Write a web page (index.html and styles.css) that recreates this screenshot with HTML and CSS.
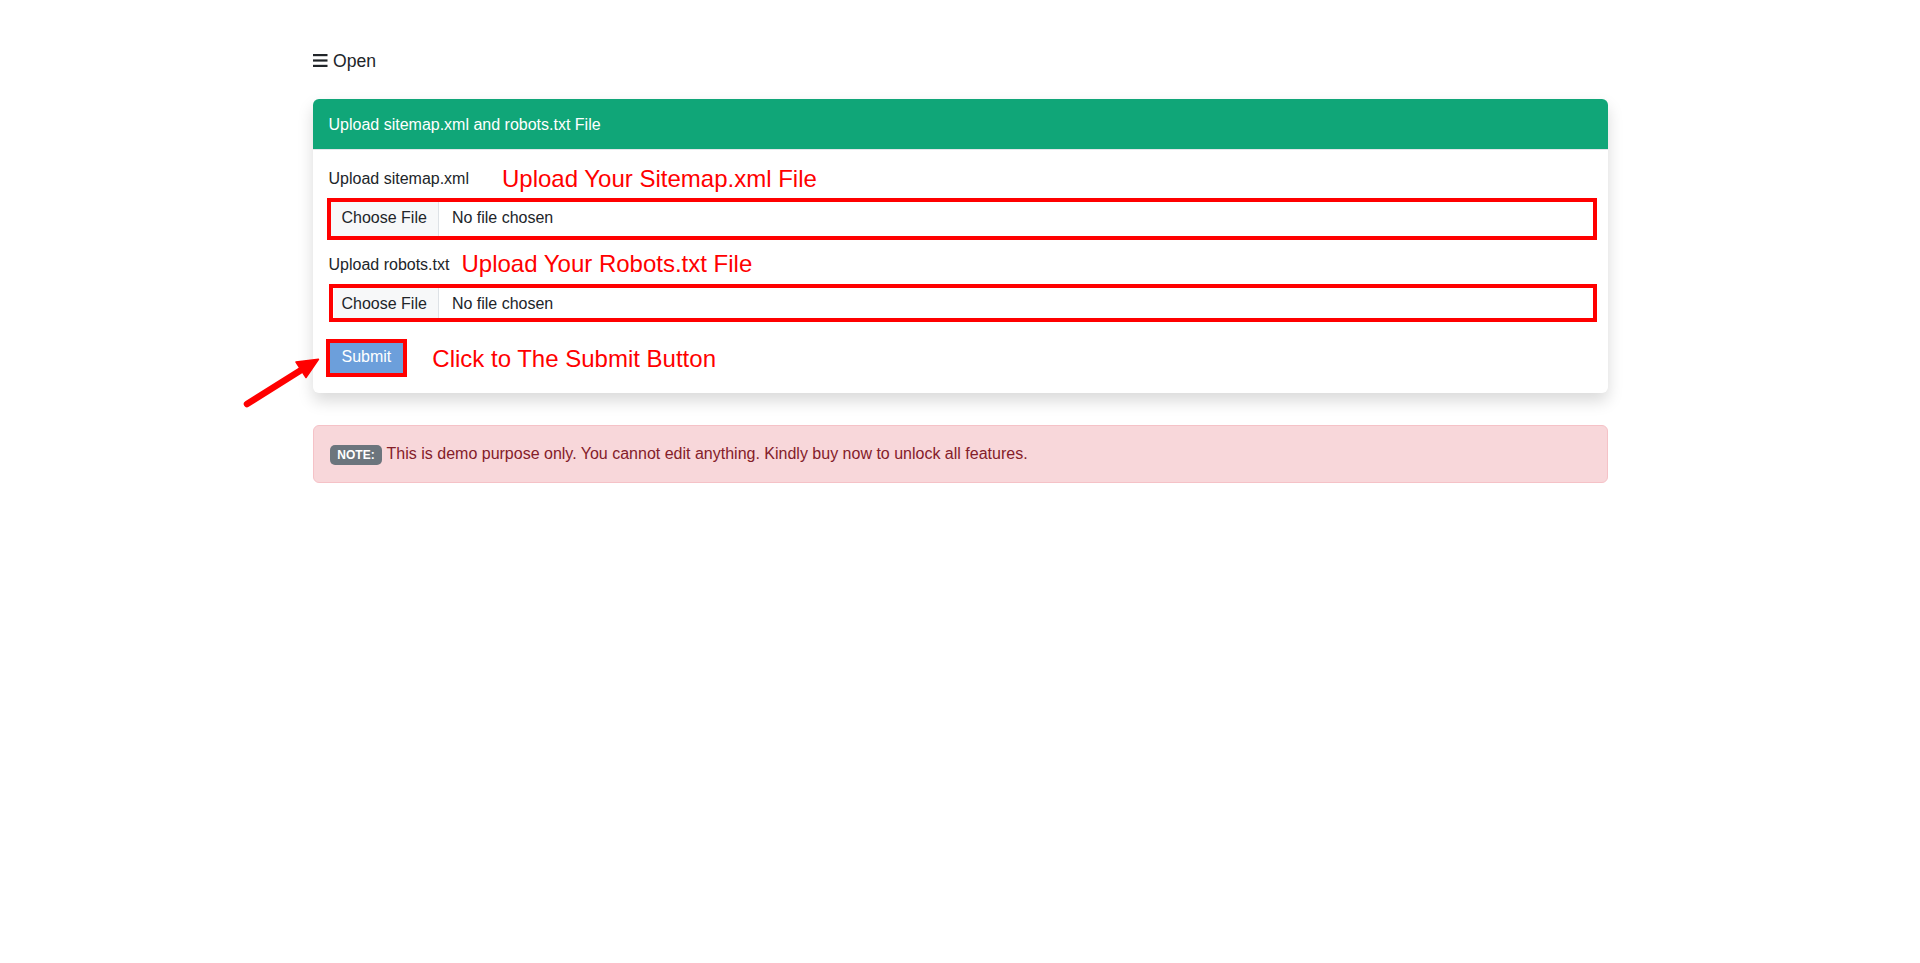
FILE: index.html
```html
<!DOCTYPE html>
<html lang="en">
<head>
<meta charset="utf-8">
<title>Upload sitemap.xml and robots.txt File</title>
<link rel="stylesheet" href="styles.css">
</head>
<body>
<div class="container">
  <div class="topbar">
    <span class="menu-btn"><svg class="menu-icon" viewBox="0 0 15 13" width="15" height="13" aria-hidden="true"><rect x="0" y="0" width="14.5" height="2.2" fill="#212529"/><rect x="0" y="5.4" width="14.5" height="2.2" fill="#212529"/><rect x="0" y="10.8" width="14.5" height="2.2" fill="#212529"/></svg>Open</span>
  </div>

  <div class="card">
    <div class="card-header">Upload sitemap.xml and robots.txt File</div>
    <div class="card-body">
      <div class="field-label"><label>Upload sitemap.xml</label><span class="annot annot-1">Upload Your Sitemap.xml File</span></div>
      <div class="file-box file-box-1"><span class="file-btn">Choose File</span><span class="file-name">No file chosen</span></div>

      <div class="field-label field-label-2"><label>Upload robots.txt</label><span class="annot annot-2">Upload Your Robots.txt File</span></div>
      <div class="file-box file-box-2"><span class="file-btn">Choose File</span><span class="file-name">No file chosen</span></div>

      <div class="submit-row">
        <span class="submit-frame"><button class="btn-submit" type="button">Submit</button></span>
        <span class="annot-3">Click to The Submit Button</span>
      </div>
    </div>
    <svg class="arrow" viewBox="0 0 87 62" width="87" height="62" aria-hidden="true">
      <line x1="8" y1="54" x2="63" y2="19.5" stroke="#ff0000" stroke-width="6.5" stroke-linecap="round"/>
      <polygon points="79.5,9.3 57,12 67,27.5" fill="#ff0000" stroke="#ff0000" stroke-width="1.5" stroke-linejoin="round"/>
    </svg>
  </div>

  <div class="alert"><span class="badge">NOTE:</span> This is demo purpose only. You cannot edit anything. Kindly buy now to unlock all features.</div>
</div>
</body>
</html>
```

FILE: styles.css
```css
html, body {
  margin: 0;
  padding: 0;
  background: #ffffff;
}

body {
  font-family: "Liberation Sans", Arial, sans-serif;
  font-size: 16px;
  line-height: 24px;
  color: #212529;
}

.container {
  width: 1295px;
  margin: 0 auto;
  padding-top: 48px;
}

/* top "Open" toggle */
.topbar {
  font-size: 17.6px;
  line-height: 26px;
  height: 26px;
  margin-bottom: 25px;
}

.menu-icon {
  margin-right: 5.5px;
  vertical-align: baseline;
}

/* card */
.card {
  position: relative;
  background: #ffffff;
  border-radius: 6px;
  box-shadow: 0 8px 16px rgba(0, 0, 0, 0.15);
  margin-bottom: 32px;
}

.card-header {
  background: #10a678;
  color: #ffffff;
  padding: 14px 16px 12px;
  line-height: 24px;
  border-bottom: 1px solid #e3e6ea;
  border-radius: 6px 6px 0 0;
}

.card-body {
  padding: 17px 11px 16px 14px;
}

.field-label {
  padding-left: 2px;
  height: 24px;
  margin-bottom: 7px;
  white-space: nowrap;
}

.field-label-2 {
  margin-bottom: 7px;
}

.annot {
  color: #ff0000;
  font-size: 24px;
  line-height: 0;
  vertical-align: -2px;
}

.annot-1 {
  margin-left: 33px;
  vertical-align: -3px;
}

.annot-2 {
  margin-left: 12px;
}

/* file inputs with red annotation frames */
.file-box {
  display: flex;
  box-sizing: border-box;
  border: 4px solid #ff0000;
  height: 42px;
  margin-bottom: 13px;
  background: #ffffff;
}

.file-btn {
  background: #f7f8f9;
  border-right: 1px solid #dee2e6;
  padding: 4px 11px 6px 11px;
  line-height: 24px;
  white-space: nowrap;
}

.file-name {
  padding: 4px 0 6px 13px;
  line-height: 24px;
  white-space: nowrap;
}

.file-box-2 {
  height: 38px;
  margin-left: 2px;
  margin-bottom: 0;
}

.file-box-2 .file-btn {
  margin-left: 1px;
  padding: 4px 11px 2px 8px;
}

.file-box-2 .file-name {
  padding: 4px 0 2px 13px;
}

/* submit */
.submit-row {
  display: flex;
  align-items: center;
  margin-top: 17px;
  margin-left: -1px;
}

.submit-frame {
  display: flex;
  border: 4px solid #ff0000;
}

.btn-submit {
  display: block;
  background: #6c9fdb;
  color: #ffffff;
  border: 0;
  margin: 0;
  font-family: inherit;
  font-size: 16px;
  line-height: 24px;
  padding: 2px 12px 4px;
}

.annot-3 {
  color: #ff0000;
  font-size: 24px;
  line-height: 24px;
  margin-left: 25px;
  padding-top: 1px;
}

/* annotation arrow overlay */
.arrow {
  position: absolute;
  left: -74px;
  top: 251px;
}

/* alert */
.alert {
  background: #f8d7da;
  border: 1px solid #f5c2c7;
  color: #842029;
  border-radius: 6px;
  padding: 16px;
  line-height: 24px;
}

.badge {
  display: inline-block;
  background: #6c757d;
  color: #ffffff;
  font-weight: 700;
  font-size: 12px;
  line-height: 1;
  padding: 4.2px 7.8px;
  border-radius: 5px;
  vertical-align: baseline;
}
```
